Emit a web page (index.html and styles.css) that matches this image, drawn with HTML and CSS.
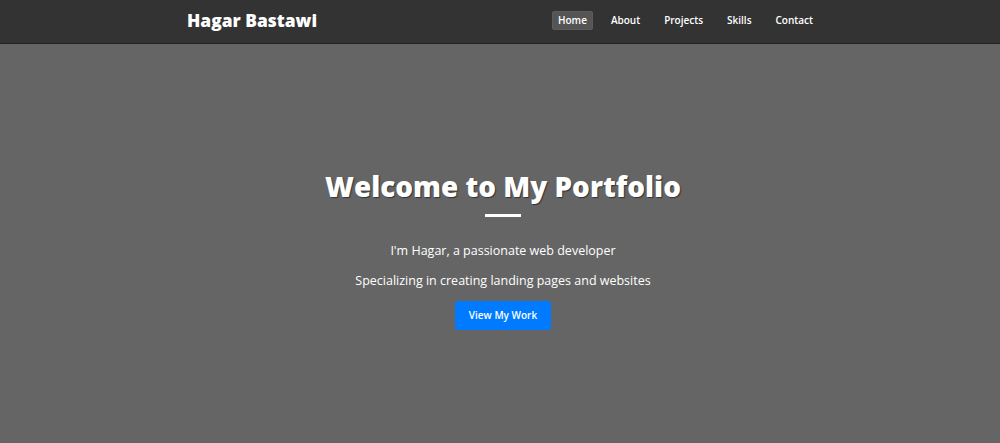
FILE: index.html
```html
<!DOCTYPE html>
<html lang="en">
<head>
    <meta charset="UTF-8">
    <meta name="viewport" content="width=device-width, initial-scale=1.0">
    <title>Hagar Bastawi | Portfolio</title>
    <link rel="stylesheet" href="styles.css">
</head>
<body>
    <header class="site-header">
        <div class="container nav-bar">
            <a class="logo" href="#">Hagar Bastawi</a>
            <nav class="nav-links">
                <a href="#" class="active">Home</a>
                <a href="#about">About</a>
                <a href="#projects">Projects</a>
                <a href="#skills">Skills</a>
                <a href="#contact">Contact</a>
            </nav>
        </div>
    </header>

    <section class="hero">
        <h1>Welcome to My Portfolio</h1>
        <div class="divider"></div>
        <p>I'm Hagar, a passionate web developer</p>
        <p>Specializing in creating landing pages and websites</p>
        <a href="#projects" class="btn">View My Work</a>
    </section>
</body>
</html>
```

FILE: styles.css
```css
* {
    box-sizing: border-box;
}
body {
    margin: 0;
    background-color: #656565;
    color: #fff;
    font-family: "Open Sans", Arial, sans-serif;
}
a {
    color: #fff;
    text-decoration: none;
}
.container {
    width: 626px;
    margin: 0 auto;
}
.site-header {
    height: 44px;
    background-color: #333;
    border-bottom: 1px solid #222;
}
.nav-bar {
    height: 100%;
    display: flex;
    align-items: center;
    justify-content: space-between;
}
.logo {
    font-size: 17.4px;
    font-weight: 800;
    margin-top: -3px;
}
.nav-links {
    display: flex;
    gap: 12px;
    margin-top: -2px;
    margin-right: -6px;
}
.nav-links a {
    font-size: 10px;
    font-weight: 600;
    padding: 2px 6px;
    line-height: 15px;
    border-radius: 3px;
}
.nav-links a.active {
    background-color: #555;
    box-shadow: inset 0 0 0 1px #5c5c5c;
}
.hero {
    height: 399px;
    display: flex;
    flex-direction: column;
    align-items: center;
    padding-top: 125px;
    padding-left: 6px;
    text-align: center;
}
.hero h1 {
    margin: 0;
    font-size: 27.9px;
    font-weight: 800;
    line-height: 35px;
    text-shadow: 1px 1px 1px #333;
}
.divider {
    width: 36px;
    height: 3px;
    background-color: #fff;
    margin: 10px 0 25px;
}
.hero p {
    margin: 0 0 12px;
    font-size: 12.5px;
    line-height: 18px;
}
.btn {
    display: inline-block;
    margin-top: -1px;
    width: 96px;
    padding: 7px 0 7px;
    line-height: 15px;
    font-size: 10px;
    font-weight: 600;
    background-color: #007bff;
    border-radius: 3px;
}
```
